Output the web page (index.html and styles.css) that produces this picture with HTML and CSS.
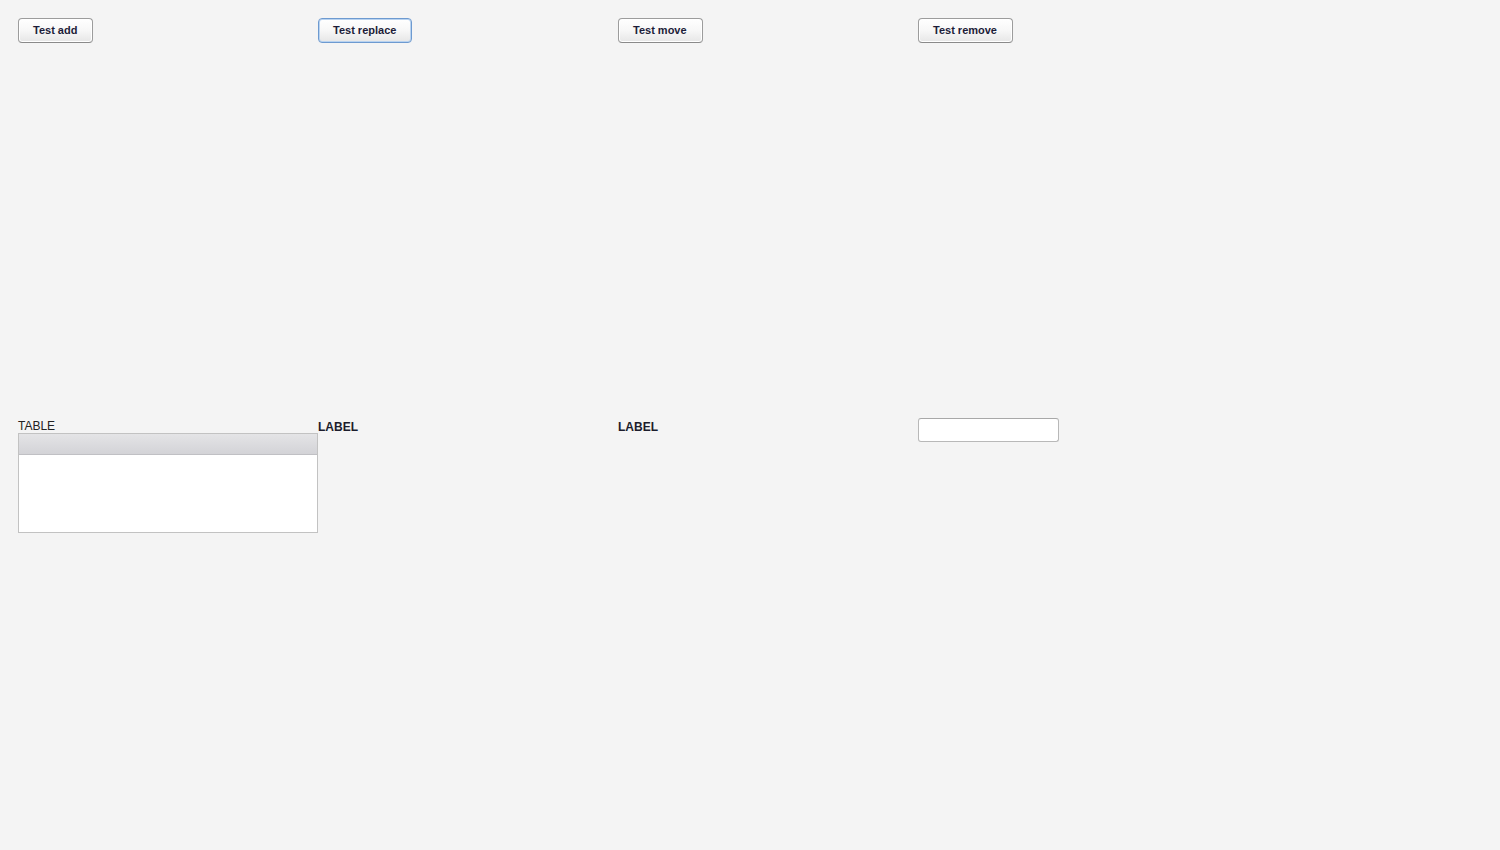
FILE: index.html
```html
<!DOCTYPE html>
<html>
<head>
<meta charset="utf-8">
<link rel="stylesheet" href="styles.css">
</head>
<body>
<div class="grid">
  <div class="cell"><button class="btn">Test add</button></div>
  <div class="cell"><button class="btn focused">Test replace</button></div>
  <div class="cell"><button class="btn">Test move</button></div>
  <div class="cell"><button class="btn">Test remove</button></div>
  <div class="cell">
    <div class="caption">TABLE</div>
    <div class="table">
      <div class="thead"></div>
      <div class="tbody"></div>
    </div>
  </div>
  <div class="cell"><div class="label">LABEL</div></div>
  <div class="cell"><div class="label">LABEL</div></div>
  <div class="cell"><input class="field" type="text"></div>
</div>
</body>
</html>
```
FILE: styles.css
```css
html, body {
  margin: 0;
  padding: 0;
  background: #f4f4f4;
  font-family: "Liberation Sans", Arial, sans-serif;
}
.grid {
  display: grid;
  grid-template-columns: repeat(4, 300px);
  grid-template-rows: 400px auto;
  padding: 18px;
}
.cell {
  display: flex;
  flex-direction: column;
  align-items: flex-start;
}
.btn {
  height: 25px;
  padding: 0 15px 2px 14px;
  border: 1px solid #9c9c9c;
  border-bottom-color: #8a8a8a;
  border-radius: 4px;
  background: linear-gradient(#ffffff 0%, #f7f7f7 50%, #e6e6e6 100%);
  box-shadow: inset 0 0 0 1px #ffffff;
  font-family: "Liberation Sans", Arial, sans-serif;
  font-weight: bold;
  font-size: 11px;
  color: #1c1c38;
  margin: 0;
}
.btn.focused {
  border-color: #6d9ad0;
  box-shadow: inset 0 0 0 1px #b9d3f0;
}
.caption {
  font-size: 12px;
  color: #222;
  margin-top: 1px;
  line-height: 14px;
}
.table {
  width: 298px;
  border: 1px solid #c2c2c2;
  background: #fff;
}
.thead {
  height: 20px;
  background: linear-gradient(#e4e4e6, #d3d3d7);
  border-bottom: 1px solid #c0c0c4;
}
.tbody {
  height: 77px;
}
.label {
  font-size: 12px;
  font-weight: bold;
  color: #1c1c2c;
  margin-top: 2px;
  line-height: 14px;
}
.field {
  width: 141px;
  height: 24px;
  box-sizing: border-box;
  border: 1px solid #b8b8b8;
  border-top-color: #a8a8a8;
  border-radius: 3px;
  background: #fff;
  margin: 0;
  padding: 0 4px;
}
```
